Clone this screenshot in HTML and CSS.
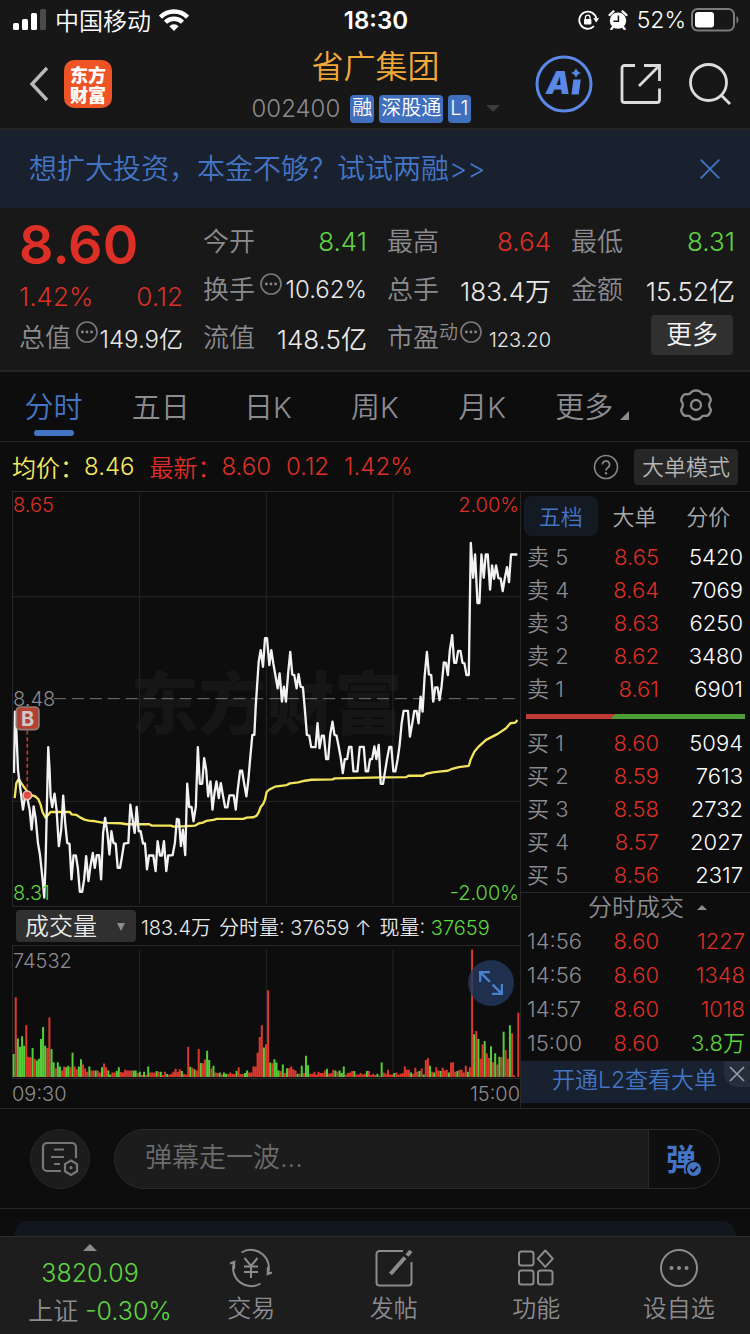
FILE: index.html
```html
<!DOCTYPE html>
<html lang="zh-CN">
<head>
<meta charset="utf-8">
<meta name="viewport" content="width=device-width, initial-scale=1">
<title>省广集团 002400</title>
<link rel="stylesheet" href="styles.css">
</head>
<body>
<div class="page">

<div class="status">
  <div class="status-side">
    <svg width="34" height="22" viewBox="0 0 34 22" fill="#fff"><rect x="0" y="14" width="6" height="7" rx="1.5"/><rect x="9" y="10" width="6" height="11" rx="1.5"/><rect x="18" y="4" width="6" height="17" rx="1.5"/><rect x="27" y="0" width="6" height="21" rx="1.5" fill="#4a4a4a"/></svg>
    <span class="carrier">中国移动</span>
    <svg width="30" height="22" viewBox="0 0 30 22"><g fill="none" stroke="#fff" stroke-width="4.4"><path d="M1.5 8.2a19 19 0 0 1 27 0"/><path d="M6.5 13.3a12 12 0 0 1 17 0"/></g><path d="M15 22l-4.6-4.8a6.6 6.6 0 0 1 9.2 0z" fill="#fff"/></svg>
  </div>
  <time class="clock">18:30</time>
  <div class="status-side status-right">
    <svg width="21" height="20" viewBox="0 0 21 20"><path d="M18.3 8.5A8.6 8.6 0 1 0 16 16.2" fill="none" stroke="#fff" stroke-width="1.8"/><path d="M15.2 8.2h6l-3 4.4z" fill="#fff"/><rect x="6" y="9" width="7.4" height="5.6" rx="1" fill="#fff"/><path d="M7.4 9.2V7.4a2.3 2.3 0 0 1 4.6 0v1.8" fill="none" stroke="#fff" stroke-width="1.3"/></svg>
    <svg width="20" height="20" viewBox="0 0 20 20"><circle cx="10" cy="10.6" r="8.2" fill="#fff"/><path d="M1.6 5L5.4 1.4M18.4 5l-3.8-3.6M3.4 19l2-2.4M16.6 19l-2-2.4" stroke="#fff" stroke-width="2.4" stroke-linecap="round"/><path d="M10.4 5.5v5.7H5.4" stroke="#171717" stroke-width="1.5" fill="none"/></svg>
    <span class="battery-text">52%</span>
    <svg width="48" height="24" viewBox="0 0 48 24"><rect x="1" y="1" width="42" height="21.5" rx="5.5" fill="none" stroke="#7b7b7b" stroke-width="2"/><rect x="4" y="4" width="19" height="15.5" rx="3" fill="#fff"/><path d="M45.5 8v7.5q2-1 2-3.7t-2-3.8z" fill="#7b7b7b"/></svg>
  </div>
</div>

<header class="header">
  <div class="header-left">
    <button class="icon-btn" aria-label="返回"><svg width="22" height="36" viewBox="0 0 22 36"><path d="M19 2L4 18l15 16" fill="none" stroke="#b9b9b9" stroke-width="3.4"/></svg></button>
    <a class="logo" href="#"><span>东方</span><span>财富</span></a>
  </div>
  <div class="header-mid">
    <h1 class="stock-name">省广集团</h1>
    <div class="stock-sub"><span class="code">002400</span><span class="tag">融</span><span class="tag">深股通</span><span class="tag">L1</span><i class="caret"></i></div>
  </div>
  <div class="header-right">
    <button class="icon-btn" aria-label="智能助手"><svg width="58" height="58" viewBox="0 0 58 58"><circle cx="29" cy="29" r="27" fill="none" stroke="#5b87e5" stroke-width="3"/><text x="11" y="39" class="ai-text">A</text><path d="M38.4 24.5h7.4l-2 15h-7.4z" fill="#5b87e5"/><path d="M41 13q1 4 5 5-4 1-5 5-1-4-5-5 4-1 5-5z" fill="#5b87e5"/></svg></button>
    <button class="icon-btn" aria-label="分享"><svg width="42" height="42" viewBox="0 0 42 42" fill="none" stroke="#dcdcdc" stroke-width="2.8"><path d="M15 2.5H4.5a2.5 2.5 0 0 0-2.500 2.500V37a2.500 2.500 0 0 0 2.500 2.500H37a2.500 2.500 0 0 0 2.500-2.500V25.500"/><path d="M24 2.500h15.500V18M39 3L19 23"/></svg></button>
    <button class="icon-btn" aria-label="搜索"><svg width="42" height="42" viewBox="0 0 42 42" fill="none" stroke="#dcdcdc" stroke-width="2.8"><circle cx="19.500" cy="19.500" r="18"/><path d="M32 32l9 9"/></svg></button>
  </div>
</header>

<div class="banner">
  <a href="#">想扩大投资，本金不够？试试两融&gt;&gt;</a>
  <button class="icon-btn" aria-label="关闭"><svg width="20" height="20" viewBox="0 0 20 20" stroke="#4475c4" stroke-width="1.8"><path d="M.7.7l18.600 18.600M19.300.7L.7 19.300"/></svg></button>
</div>

<section class="quote">
  <div class="quote-col">
    <strong class="price red">8.60</strong>
    <div class="cell change"><span class="red">1.42%</span><span class="red">0.12</span></div>
    <div class="cell tight"><span class="label">总值<svg class="dots" viewBox="0 0 22 22"><use href="#dots"/></svg></span><span>149.9亿</span></div>
  </div>
  <div class="quote-col">
    <div class="cell"><span class="label">今开</span><span class="green">8.41</span></div>
    <div class="cell tight"><span class="label">换手<svg class="dots" viewBox="0 0 22 22"><use href="#dots"/></svg></span><span>10.62%</span></div>
    <div class="cell"><span class="label">流值</span><span>148.5亿</span></div>
  </div>
  <div class="quote-col">
    <div class="cell"><span class="label">最高</span><span class="red">8.64</span></div>
    <div class="cell"><span class="label">总手</span><span>183.4万</span></div>
    <div class="cell tight"><span class="label">市盈<small>动</small><svg class="dots" viewBox="0 0 22 22"><use href="#dots"/></svg></span><span class="small-value">123.20</span></div>
  </div>
  <div class="quote-col">
    <div class="cell"><span class="label">最低</span><span class="green">8.31</span></div>
    <div class="cell"><span class="label">金额</span><span>15.52亿</span></div>
    <div class="cell cell-end"><button class="more-btn">更多</button></div>
  </div>
</section>

<nav class="tabs">
  <button class="tab active">分时</button>
  <button class="tab">五日</button>
  <button class="tab">日K</button>
  <button class="tab">周K</button>
  <button class="tab">月K</button>
  <button class="tab">更多<i class="corner"></i></button>
  <button class="tab" aria-label="设置"><svg width="34" height="32" viewBox="0 0 34 32" fill="none" stroke="#8b8b90" stroke-width="2.3"><path d="M12 3.500C13 2 14 1.500 17 1.500s4 .5 5 2 2.500 2 4.500 1.700 3 .3 4.300 2.700 1.400 3.700.3 5-1.300 4.900 0 6.200 1 2.600-.3 5-2.300 3-4.300 2.700-3.500.2-4.500 1.700-2 2-5 2-4-.5-5-2-2.500-2-4.500-1.700-3-.3-4.300-2.700-1.400-3.700-.3-5 1.300-4.900 0-6.200-1-2.600.3-5 2.300-3 4.300-2.700 3.500-.2 4.500-1.700z"/><circle cx="17" cy="16" r="5"/></svg></button>
</nav>

<div class="summary">
  <span class="yellow">均价：</span><span class="yellow">8.46</span>
  <span class="red second">最新：</span><span class="red">8.60</span><span class="red third">0.12</span><span class="red third">1.42%</span>
  <button class="icon-btn help" aria-label="帮助"><svg width="26" height="26" viewBox="0 0 26 26"><circle cx="13" cy="13" r="11.500" fill="none" stroke="#85858a" stroke-width="1.600"/><path d="M9.400 10.500a3.600 3.600 0 1 1 5.600 3c-1.500 1-2 1.500-2 3" fill="none" stroke="#85858a" stroke-width="1.800"/><circle cx="13" cy="19.300" r="1.200" fill="#85858a"/></svg></button>
  <button class="mode-btn">大单模式</button>
</div>

<main class="main">
  <section class="charts">
    <div class="price-chart">
      <span class="watermark">东方财富</span>
      <svg class="plot" viewBox="37 4 1525 1246" preserveAspectRatio="none">
        <path class="grid" d="M418 8V1246M799 8V1246M1180 8V1246M37 319H1562M37 935H1562"/>
        <path class="mid" d="M160 626H1562"/>
        <polyline class="avg" id="avg"/>
        <polyline class="last" id="last"/>
        <path d="M80 722V900" stroke="#c0392b" stroke-width="5" stroke-dasharray="12 8"/>
        <rect x="47" y="651" width="68" height="68" rx="12" fill="#b5402f" stroke="#8f7d78" stroke-width="5"/>
        <text class="buy-mark" x="81" y="707">B</text>
        <circle cx="80" cy="917" r="13" fill="#e04a3a" stroke="#e9bdb6" stroke-width="5"/>
      </svg>
      <span class="axis top-left red">8.65</span>
      <span class="axis top-right red">2.00%</span>
      <span class="axis mid-left">8.48</span>
      <span class="axis bottom-left green">8.31</span>
      <span class="axis bottom-right green">-2.00%</span>
    </div>
    <div class="volume-head">
      <button class="indicator">成交量<i></i></button>
      <span>183.4万</span><span>分时量: 37659 ↑</span><span>现量: <b>37659</b></span>
    </div>
    <div class="volume-chart">
      <svg class="plot" viewBox="37 136 1525 402" preserveAspectRatio="none">
        <path class="grid" d="M418 145V534M799 145V534M1180 145V534"/>
        <path class="bar-up" id="bars-up"/>
        <path class="bar-down" id="bars-down"/>
      </svg>
      <span class="axis top-left">74532</span>
      <button class="expand" aria-label="放大"><svg width="24" height="24" viewBox="0 0 22 22" fill="none" stroke="#4a80d0" stroke-width="2.200"><path d="M1 10V1h9M1.500 1.500l8.500 8.500M21 12v9h-9M20.500 20.500L12.500 12.500"/></svg></button>
    </div>
    <div class="time-axis"><span>09:30</span><span>15:00</span></div>
  </section>

  <aside class="book">
    <div class="book-tabs"><button class="active">五档</button><button>大单</button><button>分价</button></div>
    <table class="levels">
      <tr><th>卖 5</th><td>8.65</td><td>5420</td></tr>
      <tr><th>卖 4</th><td>8.64</td><td>7069</td></tr>
      <tr><th>卖 3</th><td>8.63</td><td>6250</td></tr>
      <tr><th>卖 2</th><td>8.62</td><td>3480</td></tr>
      <tr><th>卖 1</th><td>8.61</td><td>6901</td></tr>
    </table>
    <div class="ratio"></div>
    <table class="levels">
      <tr><th>买 1</th><td>8.60</td><td>5094</td></tr>
      <tr><th>买 2</th><td>8.59</td><td>7613</td></tr>
      <tr><th>买 3</th><td>8.58</td><td>2732</td></tr>
      <tr><th>买 4</th><td>8.57</td><td>2027</td></tr>
      <tr><th>买 5</th><td>8.56</td><td>2317</td></tr>
    </table>
    <button class="deals-head">分时成交<i></i></button>
    <table class="levels deals">
      <tr><th>14:56</th><td>8.60</td><td class="red">1227</td></tr>
      <tr><th>14:56</th><td>8.60</td><td class="red">1348</td></tr>
      <tr><th>14:57</th><td>8.60</td><td class="red">1018</td></tr>
      <tr><th>15:00</th><td>8.60</td><td class="green">3.8万</td></tr>
    </table>
    <div class="promo"><a href="#">开通L2查看大单</a><button class="promo-close" aria-label="关闭"><svg width="16" height="16" viewBox="0 0 16 16" stroke="#9a9ea6" stroke-width="1.600"><path d="M1 1l14 14M15 1L1 15"/></svg></button></div>
  </aside>
</main>

<div class="comment">
  <button class="round-btn" aria-label="弹幕设置"><svg width="38" height="36" viewBox="0 0 38 36" fill="none" stroke="#77777b" stroke-width="2.200"><path d="M20 30H6a4 4 0 0 1-4-4V6a4 4 0 0 1 4-4h25a4 4 0 0 1 4 4v11"/><path d="M13 8.500h10M10 16h13M13 23h6"/><path d="M30 19.500l6 3.600v7.200l-6 3.600-6-3.600v-7.200z"/><circle cx="30" cy="26.700" r="1.600" fill="#77777b" stroke="none"/></svg></button>
  <div class="comment-box">
    <input type="text" aria-label="弹幕" placeholder="弹幕走一波...">
    <button class="danmu" aria-label="弹幕开关"><svg width="36" height="50" viewBox="0 0 36 50"><text class="danmu-text" x="0" y="36">弹</text><circle cx="28" cy="35" r="8.500" fill="#0f0f0f"/><circle cx="28" cy="35" r="7" fill="#4475c4"/><path d="M24.500 35l2.600 2.600 4.500-5" fill="none" stroke="#111" stroke-width="1.800"/></svg></button>
  </div>
</div>
<div class="sheet-area"><div class="sheet"></div></div>

<footer class="footer">
  <button class="index"><i></i><span class="green">3820.09</span><span class="index-change">上证 <b>-0.30%</b></span></button>
  <button><svg viewBox="0 0 44 40"><path d="M12.500 4.500A18 18 0 0 1 38.800 26l4.200-1.500M38.800 26V19M31.500 35.500A18 18 0 0 1 5.200 14L1 15.500M5.200 14v7"/><path d="M15.500 10l6.500 8 6.500-8M22 18v12M15 18.500h14M15 24h14"/></svg>交易</button>
  <button><svg viewBox="0 0 44 40"><path d="M31 3H7.500a3 3 0 0 0-3 3v28.500a3 3 0 0 0 3 3h29a3 3 0 0 0 3-3V14"/><path d="M18.500 26L33 9.500" stroke-width="4"/><path d="M35 7.500l4-4.500" stroke-width="4"/></svg>发帖</button>
  <button><svg viewBox="0 0 44 40"><rect x="5" y="3.500" width="14.500" height="14" rx="2.500"/><rect x="5" y="22.500" width="14.500" height="14" rx="2.500"/><rect x="24" y="22.500" width="14.500" height="14" rx="2.500"/><path d="M31.300 2.500l7.500 8.200-7.500 8.200-7.500-8.200z" stroke-linejoin="round"/></svg>功能</button>
  <button><svg viewBox="0 0 44 40"><circle cx="22" cy="20" r="18"/><g fill="#8b8b90" stroke="none"><circle cx="14.500" cy="20" r="2"/><circle cx="22" cy="20" r="2"/><circle cx="29.500" cy="20" r="2"/></g></svg>设自选</button>
</footer>
</div>

<svg width="0" height="0" class="defs"><symbol id="dots" viewBox="0 0 22 22"><circle cx="11" cy="11" r="10" fill="none" stroke="#77777b" stroke-width="1.700"/><g fill="#88888c"><circle cx="6.400" cy="11" r="1.400"/><circle cx="11" cy="11" r="1.400"/><circle cx="15.600" cy="11" r="1.400"/></g></symbol></svg>
<script src="chart.js"></script>
</body>
</html>
```
FILE: styles.css
```css
* { box-sizing: border-box; }
body {
  margin: 0;
  background: #0d0d0d;
  color: #e8e8e8;
  font-family: Inter, "Noto Sans CJK SC", sans-serif;
  font-size: 24px;
  font-weight: 350;
}
button, input { font: inherit; color: inherit; border: 0; background: none; padding: 0; margin: 0; }
a { color: inherit; text-decoration: none; }
svg { display: block; flex: none; }
b { font-weight: inherit; color: #5fd540; }
.defs { position: absolute; }
.red { color: #dc2f25; }
.green { color: #5fd540; }
.yellow { color: #f7ea62; }
.icon-btn { display: block; }
.page { min-height: 100vh; display: flex; flex-direction: column; }

/* status bar */
.status { display: grid; grid-template-columns: 1fr auto 1fr; align-items: center; height: 40px; padding: 0 11px 0 13px; background: #171717; color: #fff; }
.status-side { display: flex; align-items: center; gap: 8px; }
.status-right { justify-content: flex-end; gap: 9px; }
.carrier { padding-bottom: 2px; }
.clock { font-weight: 600; }
.battery-text { font-size: 23px; margin-right: -4px; }

/* header */
.header { display: grid; grid-template-columns: 1fr auto 1fr; height: 90px; padding: 0 19px 0 28px; background: #171717; border-bottom: 2px solid #242424; align-items: center; }
.header-left, .header-right { display: flex; align-items: center; }
.header-left { gap: 14px; }
.header-right { justify-content: flex-end; gap: 27px; }
.logo { width: 48px; height: 48px; border-radius: 10px; background: #ee5426; color: #fff; display: flex; flex-direction: column; align-items: center; justify-content: center; font: 900 18px/20px "Noto Sans CJK SC", sans-serif; }
.header-mid { display: flex; flex-direction: column; align-items: center; gap: 7px; margin-right: 8px; padding-top: 2px; }
.stock-name { margin: 0; font-size: 32px; line-height: 40px; font-weight: 350; color: #f0a93a; }
.stock-sub { display: flex; align-items: center; gap: 5px; }
.code { font-size: 24px; color: #8b8b90; margin-right: 5px; }
.tag { height: 28px; padding: 0 2px; border-radius: 4px; background: #4070bd; color: #fff; font-size: 20px; line-height: 27px; }
.caret { margin-left: 10px; border: 7px solid transparent; border-top-color: #3c3c3c; border-bottom: 0; }
.ai-text { font: italic 900 31px Inter, sans-serif; fill: #5b87e5; }

.banner { display: flex; align-items: center; justify-content: space-between; height: 78px; padding: 0 30px 0 29px; background: #19212f; color: #4475c4; font-size: 28px; }
.banner a { padding-bottom: 4px; }

/* quote */
.quote { display: grid; grid-template-columns: repeat(4, 1fr); gap: 20px; padding: 9px 15px 9px 19px; background: #181818; border-bottom: 2px solid #252525; }
.quote-col { display: flex; flex-direction: column; min-width: 0; }
.cell { display: flex; align-items: center; justify-content: space-between; height: 48px; font-size: 26px; white-space: nowrap; }
.price { height: 56px; font-size: 54px; line-height: 56px; font-weight: 600; margin-bottom: 6px; }
.change { height: 34px; }
.label { display: flex; align-items: center; font-size: 26px; padding-bottom: 4px; color: #8b8b90; }
.label small { font-size: 19px; align-self: flex-start; }
.dots { width: 22px; height: 22px; margin-left: 5px; margin-bottom: 6px; }
.label small + .dots { margin-left: 2px; }
.tight { font-size: 24px; }
.tight > span:last-child { margin-left: -4px; }
.tight > .small-value { font-size: 20px; padding-top: 6px; }
.cell-end { justify-content: flex-end; }
.more-btn { width: 82px; height: 40px; margin: 0 2px 4px 0; border-radius: 4px; background: #303030; color: #f4f4f4; font-size: 26px; line-height: 38px; }

/* tabs */
.tabs { display: flex; height: 70px; border-bottom: 1px solid #282828; color: #8b8b90; font-size: 29px; }
.tab { position: relative; flex: 1; display: flex; align-items: center; justify-content: center; padding-bottom: 3px; }
.tab.active { color: #4475c4; }
.tab.active::after { content: ""; position: absolute; left: 50%; bottom: 5px; width: 40px; height: 6px; margin-left: -20px; border-radius: 3px; background: #4475c4; }
.corner { margin: 20px -6px 0 7px; border-left: 9px solid transparent; border-bottom: 9px solid #8b8b90; }

.summary { display: flex; align-items: center; height: 49px; padding: 0 12px; }
.second, .third { margin-left: 15px; }
.help { margin-left: auto; margin-right: 15px; }
.mode-btn { width: 104px; height: 36px; border-radius: 4px; background: #262626; color: #b4b4b6; font-size: 22px; line-height: 34px; }

/* charts */
.main { display: grid; grid-template-columns: 509fr 229fr; padding-left: 12px; border-bottom: 1px solid #282828; }
.charts { border-right: 1px solid #282828; min-width: 0; }
.price-chart, .volume-chart { position: relative; border: 1px solid #282828; border-right: 0; }
.price-chart { height: 416px; overflow: hidden; }
.plot { display: block; position: relative; width: 100%; height: 100%; overflow: visible; }
.grid { stroke: #262626; stroke-width: 3; fill: none; }
.mid { stroke: #77777b; stroke-width: 3; stroke-dasharray: 36 18; }
.avg { fill: none; stroke: #f2e45c; stroke-width: 7; stroke-linejoin: round; }
.last { fill: none; stroke: #f2f2f2; stroke-width: 7; stroke-linejoin: round; }
.bar-up, .bar-down { fill: none; stroke-width: 6; }
.bar-up { stroke: #dc382d; }
.bar-down { stroke: #55cc38; }
.buy-mark { font: 700 60px Inter, sans-serif; fill: #cfc9c8; text-anchor: middle; }
.watermark { position: absolute; inset: 0; display: flex; align-items: center; justify-content: center; font-size: 68px; font-weight: 900; color: #161616; }
.axis { position: absolute; font-size: 20px; line-height: 24px; }
.mid-left, .volume-chart .axis { color: #8b8b90; }
.top-left { left: 0; top: 1px; }
.top-right { right: 1px; top: 1px; }
.mid-left { left: 0; top: 50%; margin-top: -12px; }
.bottom-left { left: 0; bottom: 1px; }
.bottom-right { right: 1px; bottom: 1px; }
.volume-head { display: flex; align-items: center; height: 38px; gap: 8px; padding-left: 4px; font-size: 20px; white-space: nowrap; }
.indicator { display: flex; align-items: center; justify-content: space-between; width: 120px; height: 32px; margin-right: -3px; padding: 2px 11px 0 9px; border-radius: 4px; background: #303030; font-size: 24px; line-height: 30px; }
.indicator i { border: 4px solid transparent; border-top: 8px solid #8b8b90; border-bottom: 0; }
.volume-chart { height: 134px; }
.volume-chart .top-left { top: 3px; }
.expand { position: absolute; right: 6px; top: 14px; width: 46px; height: 46px; border-radius: 50%; background: rgba(35, 57, 94, .8); display: flex; align-items: center; justify-content: center; }
.time-axis { display: flex; justify-content: space-between; height: 29px; font-size: 20px; line-height: 31px; color: #8b8b90; }

/* order book */
.book { border-top: 1px solid #282828; display: flex; flex-direction: column; min-width: 0; }
.book-tabs { display: flex; height: 40px; margin: 4px 5px 5px 3px; font-size: 22px; color: #a8a8ab; }
.book-tabs button { flex: 1; border-radius: 8px; padding-bottom: 2px; }
.book-tabs .active { background: #141a24; color: #4475c4; }
.levels { width: 100%; border-collapse: collapse; table-layout: fixed; font-size: 22px; line-height: 33px; }
.levels th, .levels td { padding: 0; height: 33px; text-align: right; font-weight: inherit; white-space: nowrap; }
.levels th { width: 70px; padding-left: 6px; text-align: left; color: #8b8b90; }
.levels td:nth-child(2) { width: 68px; color: #dc2f25; }
.levels td:last-child { padding-right: 7px; }
.levels td:last-child:not([class]) { color: #fff; }
.ratio { height: 5px; margin: 8px 5px; background: linear-gradient(135deg, #c03a35 0 40%, #4b9f36 40%); }
.deals-head { display: flex; align-items: center; justify-content: center; gap: 13px; height: 32px; padding: 0 0 2px 24px; border-top: 1px solid #282828; line-height: 28px; color: #8b8b90; }
.deals-head i { border: 5px solid transparent; border-bottom-color: #8b8b90; border-top: 0; }
.deals th, .deals td { height: 34px; }
.deals td:last-child { padding-right: 5px; }
.promo { position: relative; height: 42px; margin-top: auto; margin-bottom: 5px; background: #172130; color: #4475c4; font-size: 23px; line-height: 38px; text-align: center; padding-right: 2px; }
.promo-close { position: absolute; right: 0; top: 0; width: 26px; height: 26px; border-radius: 0 0 0 14px; background: #262e3b; display: flex; align-items: center; justify-content: center; }

/* comment bar */
.comment { display: flex; align-items: center; gap: 24px; height: 100px; padding: 0 30px; border-bottom: 1px solid #282828; }
.round-btn { width: 60px; height: 60px; border-radius: 50%; background: #1c1c1c; border: 1px solid #262626; display: flex; align-items: center; justify-content: center; }
.comment-box { flex: 1; display: flex; height: 60px; border: 1px solid #2a2a2a; border-radius: 30px; overflow: hidden; background: #1c1c1c; }
.comment-box input { flex: 1; min-width: 0; padding: 0 30px 2px; font-size: 27px; outline: 0; }
.comment-box input::placeholder { color: #6c6c6c; opacity: 1; }
.danmu { width: 71px; border-left: 1px solid #2a2a2a; background: #0f0f0f; display: flex; align-items: center; justify-content: center; }
.danmu-text { font: 700 30px "Noto Sans CJK SC", sans-serif; fill: #4475c4; }
.sheet-area { flex: 1; display: flex; min-height: 27px; padding: 12px 14px 0; }
.sheet { flex: 1; border-radius: 28px 28px 0 0; background: #12171f; }

/* footer */
.footer { display: flex; height: 98px; background: #1d1d1d; border-top: 1px solid #2c2c2c; color: #8b8b90; }
.footer button { flex: 1; display: flex; flex-direction: column; align-items: center; gap: 5px; padding-top: 11px; line-height: 32px; }
.footer svg { width: 44px; height: 40px; fill: none; stroke: #8b8b90; stroke-width: 2; }
.footer .index { flex: 0 0 180px; gap: 6px; padding-top: 7px; font-size: 25px; line-height: 32px; white-space: nowrap; }
.index i { border: 7px solid transparent; border-bottom-color: #8b8b90; border-top: 0; }
.index-change { padding-left: 20px; }
```
FILE: chart.js
```js
// Intraday price and average lines, as x,y pairs in plot units.
const last = "40,850 43,665 47,720 52,840 58,890 62,920 67,960 74,915 80,925 87,960 93,1020 99,950 105,985 112,1060 118,1095 125,1160 131,1225 135,1120 138,990 143,772 147,840 150,920 155,952 162,912 168,960 175,1070 182,1020 188,918 194,1000 200,1060 207,1063 213,1170 219,1098 226,1098 232,1135 238,1207 245,1207 251,1170 257,1100 264,1175 270,1130 277,1090 283,1135 289,1097 296,1097 302,1170 308,1030 314,985 321,1030 327,1095 333,1025 339,1060 346,1063 352,1135 359,1135 365,1100 371,1062 384,1060 390,945 396,985 403,1030 409,952 415,1025 421,1025 428,1062 434,1062 440,1140 446,1098 459,1098 466,1145 472,1055 479,1098 485,1098 491,1055 498,1145 504,1098 517,1097 524,1060 530,988 536,990 542,1070 548,1020 555,1097 561,882 567,952 574,952 580,995 587,950 593,772 599,882 606,882 612,805 618,840 624,920 631,875 637,960 643,910 649,875 656,925 662,880 669,920 675,953 682,953 688,917 701,917 707,960 713,900 720,843 726,843 732,880 739,920 745,870 750,810 757,735 763,735 767,650 771,590 776,515 782,480 789,530 795,444 801,444 808,525 814,480 820,520 827,560 833,595 839,550 846,635 852,590 858,635 865,545 871,485 877,553 883,555 890,595 896,552 902,590 909,592 915,660 921,735 928,737 934,772 947,772 953,700 959,775 966,737 972,737 979,808 985,808 991,735 998,695 1004,735 1010,737 1017,772 1023,805 1029,850 1035,808 1042,808 1048,771 1055,771 1061,845 1073,845 1080,771 1092,771 1098,845 1105,845 1111,808 1117,808 1124,770 1130,808 1137,765 1143,882 1150,882 1156,845 1162,808 1169,771 1175,771 1181,845 1187,845 1194,808 1200,765 1206,700 1212,663 1225,663 1231,740 1238,700 1244,663 1251,663 1257,700 1263,620 1269,665 1275,560 1282,485 1288,553 1295,555 1301,635 1307,592 1314,592 1320,630 1326,590 1333,517 1339,518 1345,555 1351,480 1358,435 1364,518 1370,518 1376,482 1383,482 1389,518 1395,520 1401,555 1408,555 1411,350 1414,157 1421,262 1427,192 1434,338 1440,338 1446,192 1453,262 1459,192 1465,192 1472,298 1478,225 1484,265 1490,225 1497,263 1504,265 1510,302 1516,265 1523,230 1529,275 1535,192 1554,192";
const avg = "42,925 47,880 54,868 62,880 70,892 80,905 88,915 104,920 113,928 120,945 126,968 135,984 143,975 150,967 208,967 213,974 228,976 240,984 252,990 265,993 285,995 310,1000 360,1001 380,1004 447,1004 455,1008 512,1008 520,1011 550,1010 585,1008 597,1001 608,999 618,994 640,991 650,988 730,988 740,984 760,983 770,978 776,968 782,952 790,942 795,930 800,907 807,900 825,891 860,886 870,881 895,878 915,873 935,870 998,869 1005,866 1150,863 1220,862 1227,858 1270,858 1280,852 1300,848 1325,845 1345,843 1358,837 1378,832 1408,828 1414,808 1425,785 1440,768 1460,750 1495,732 1520,715 1533,700 1548,698 1554,690";

// One entry per minute: r = rising, g = falling, followed by the bar height.
const volume = "g70 r243 g117 g92 g124 g95 r158 r62 r60 g88 r56 g50 g56 g116 g152 g95 r88 r181 g85 g45 r27 g45 g32 r20 r32 g30 g34 r30 g74 r32 r24 g32 g54 r38 r26 r16 g32 r20 r20 g20 r20 r14 g30 r41 r30 g20 g8 r14 r14 g18 g30 r15 r14 r22 r20 r20 r20 g20 g20 r12 g16 r6 g16 r6 g32 r14 r14 r14 g18 r16 g16 r6 r16 g9 r7 r10 r16 r25 r16 r24 g18 r9 r8 r92 g31 r28 g24 r20 r85 g43 r42 r53 g80 g52 r26 g34 r14 r12 g14 r8 g14 g10 r9 r14 r10 r9 g18 r30 r9 r9 g12 g20 r14 r14 r32 r32 r74 r122 r158 g90 r100 r264 g44 r42 g54 g44 g20 r18 g38 r12 g27 r27 r32 r24 r20 g10 r10 g34 r12 g65 g36 r10 r10 r16 r8 r16 r12 r12 r20 g25 r10 r12 r22 g20 r16 g20 g12 g32 r8 r12 r14 r18 g18 r8 r8 r12 r8 r10 g18 r18 r6 r10 r6 g10 r4 g44 r14 r10 r22 r8 r8 g12 r14 r8 r10 r12 r32 r22 r22 g14 r10 r28 r16 g18 r26 g8 r52 r58 g34 r16 g14 r30 r20 g18 r28 r20 r22 g14 r44 r45 r16 g18 r22 r22 r14 r34 g16 r30 r388 g130 r140 g116 r56 r100 g110 r72 r58 g94 r45 g72 r38 g62 r60 g138 r82 r56 g158 r133 r5 r0 r196".split(" ");

const BASE = 535;
const START = 39;
const END = 1557;
const step = (END - START) / (volume.length - 1);
const paths = { r: "", g: "" };
volume.forEach((entry, i) => {
  const x = (START + i * step).toFixed(1);
  paths[entry[0]] += `M${x} ${BASE}v-${entry.slice(1)}`;
});

document.getElementById("last").setAttribute("points", last);
document.getElementById("avg").setAttribute("points", avg);
document.getElementById("bars-up").setAttribute("d", paths.r);
document.getElementById("bars-down").setAttribute("d", paths.g);
```
